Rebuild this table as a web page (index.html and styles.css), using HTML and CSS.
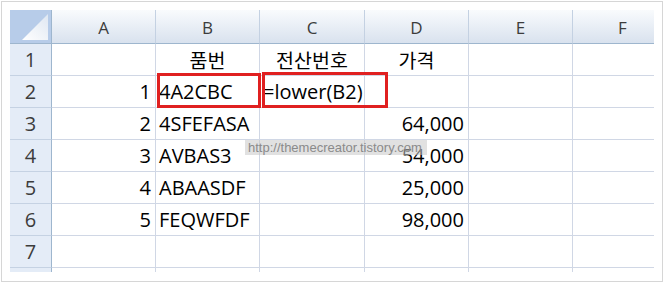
FILE: index.html
```html
<!DOCTYPE html>
<html lang="ko">
<head>
<meta charset="utf-8">
<link rel="stylesheet" href="styles.css">
</head>
<body>
<div class="frame">
  <div class="viewport">
    <div class="sheet">
      <div class="corner">
        <svg width="41" height="33" viewBox="0 0 41 33">
          <defs>
            <linearGradient id="tri" x1="0" y1="1" x2="1" y2="0">
              <stop offset="0" stop-color="#ffffff"/>
              <stop offset="1" stop-color="#dfe7f2"/>
            </linearGradient>
          </defs>
          <polygon points="12,30 38,4 38,30" fill="url(#tri)"/>
        </svg>
      </div>
      <div class="ch">A</div><div class="ch">B</div><div class="ch">C</div><div class="ch">D</div><div class="ch">E</div><div class="ch">F</div>

      <div class="rh">1</div><div class="c"></div><div class="c ctr ko">품번</div><div class="c ctr ko">전산번호</div><div class="c ctr ko">가격</div><div class="c"></div><div class="c"></div>
      <div class="rh">2</div><div class="c num">1</div><div class="c">4A2CBC</div><div class="c over">=lower(B2)</div><div class="c"></div><div class="c"></div><div class="c"></div>
      <div class="rh">3</div><div class="c num">2</div><div class="c">4SFEFASA</div><div class="c"></div><div class="c num">64,000</div><div class="c"></div><div class="c"></div>
      <div class="rh">4</div><div class="c num">3</div><div class="c">AVBAS3</div><div class="c"></div><div class="c num">54,000</div><div class="c"></div><div class="c"></div>
      <div class="rh">5</div><div class="c num">4</div><div class="c">ABAASDF</div><div class="c"></div><div class="c num">25,000</div><div class="c"></div><div class="c"></div>
      <div class="rh">6</div><div class="c num">5</div><div class="c">FEQWFDF</div><div class="c"></div><div class="c num">98,000</div><div class="c"></div><div class="c"></div>
      <div class="rh">7</div><div class="c"></div><div class="c"></div><div class="c"></div><div class="c"></div><div class="c"></div><div class="c"></div>
      <div class="rh"></div><div class="c"></div><div class="c"></div><div class="c"></div><div class="c"></div><div class="c"></div><div class="c"></div>
    </div>
    <div class="mark mark-b2"></div>
    <div class="mark mark-c2"></div>
    <div class="tip">http://themecreator.tistory.com</div>
  </div>
</div>
</body>
</html>
```

FILE: styles.css
```css
html, body {
  margin: 0;
  padding: 0;
  background: #ffffff;
}

.frame {
  margin: 1px 0 0 1px;
  width: 662px;
  height: 281px;
  box-sizing: border-box;
  border: 1px solid #d6d6d6;
  padding: 8px 0 0 8px;
}

.viewport {
  position: relative;
  width: 644px;
  height: 262px;
  overflow: hidden;
}

.sheet {
  display: grid;
  grid-template-columns: 42px 104px 104px 105px 104px 104px 100px;
  grid-template-rows: 34px repeat(8, 32px);
  font-family: "Open Sans", "Noto Sans CJK KR", sans-serif;
  font-size: 20px;
  color: #000000;
}

.sheet > div {
  box-sizing: border-box;
  display: flex;
  align-items: center;
  overflow: visible;
  white-space: nowrap;
}

.corner {
  background: #b7cce9;
  border-right: 1px solid #9eb6ce;
  border-bottom: 1px solid #9eb6ce;
}

.corner svg {
  display: block;
}

.ch {
  justify-content: center;
  font-size: 17px;
  color: #3c3c3c;
  background: linear-gradient(#f9fbfd, #e7edf5 55%, #d9e2ee);
  border-right: 1px solid #c4d1e2;
  border-bottom: 1px solid #9eb6ce;
  padding-top: 2px;
}

.rh {
  justify-content: center;
  color: #3c3c3c;
  background: #e4ecf7;
  border-right: 1px solid #9eb6ce;
  border-bottom: 1px solid #c5d2e3;
}

.c {
  border-right: 1px solid #d0d7e5;
  border-bottom: 1px solid #d0d7e5;
  padding: 0 3px;
}

.num {
  justify-content: flex-end;
  padding-right: 4px;
}

.ctr {
  justify-content: center;
}

.ko {
  font-family: "Noto Sans CJK KR", sans-serif;
  font-size: 19.5px;
}

.over {
  position: relative;
  z-index: 1;
}

.mark {
  position: absolute;
  box-sizing: border-box;
  border: 3px solid #e02020;
  z-index: 2;
}

.mark-b2 {
  left: 147px;
  top: 63px;
  width: 104px;
  height: 35px;
}

.mark-c2 {
  left: 252px;
  top: 62px;
  width: 126px;
  height: 36px;
}

.tip {
  position: absolute;
  left: 235px;
  top: 130px;
  width: 182px;
  height: 15px;
  box-sizing: border-box;
  padding-left: 3px;
  background: rgba(200, 200, 200, 0.55);
  color: #8a8a8a;
  font-family: "Liberation Sans", Arial, sans-serif;
  font-size: 13px;
  line-height: 15px;
  white-space: nowrap;
  z-index: 3;
}
```
